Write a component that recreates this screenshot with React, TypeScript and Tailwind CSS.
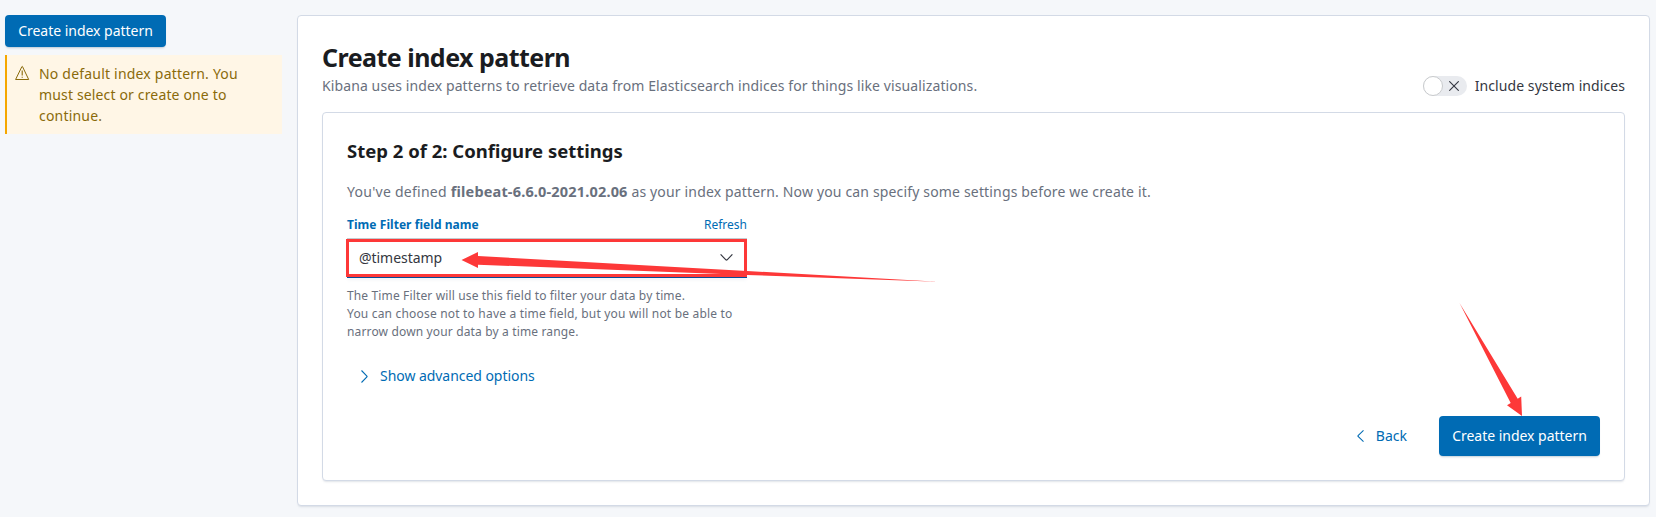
import type { ReactNode } from "react";

function PrimaryButton({ children, size }: { children: ReactNode; size: "s" | "m" }) {
  return (
    <button
      className={`w-[161px] shrink-0 rounded-[4px] bg-[#006bb4] text-center text-[14px] tracking-[-0.02px] text-white shadow-[0_2px_2px_-1px_rgba(54,97,126,0.3)] ${
        size === "s" ? "h-8 leading-8" : "h-10 leading-10"
      }`}
    >
      {children}
    </button>
  );
}

function WarningIcon() {
  return (
    <svg className="mt-[2px] block h-4 w-4 shrink-0" viewBox="0 0 16 16" fill="none" stroke="#8a6a0a">
      <path d="M6.9 1.6 0.6 14.5h13.1L7.5 1.6Q7.2 1.1 6.9 1.6Z" strokeWidth="1" strokeLinejoin="round" />
      <path d="M7.2 5.5v5M7.2 11.7v1" strokeWidth="1.1" />
    </svg>
  );
}

function Sidebar() {
  return (
    <aside className="w-[297px] shrink-0 pl-[5px] pt-[15px]">
      <PrimaryButton size="s">Create index pattern</PrimaryButton>
      <div className="mt-2 flex h-[79px] w-[277px] border-l-2 border-[#f5a700] bg-[#fff6e6] pl-2 pt-[8px]">
        <WarningIcon />
        <p className="ml-2 text-[14px] leading-[21px] tracking-[0.2px] text-[#8a6a0a]">
          No default index pattern. You
          <br />
          <span className="tracking-[0.15px]">must select or create one to</span>
          <br />
          continue.
        </p>
      </div>
    </aside>
  );
}

function SystemIndicesSwitch() {
  return (
    <label className="flex h-5 items-center">
      <span className="flex h-5 w-11 items-center rounded-full bg-[#e9ebef]">
        <span className="h-5 w-5 rounded-full border border-[#c9cbcd] bg-white" />
        <svg className="ml-[6px] h-[10px] w-[10px]" viewBox="0 0 10 10" stroke="#343741" strokeWidth="1.1">
          <path d="M0.3 0.3 9.7 9.7M9.7 0.3 0.3 9.7" />
        </svg>
      </span>
      <span className="ml-2 whitespace-nowrap text-[14px] leading-5 tracking-[0.08px] text-[#343741]">
        Include system indices
      </span>
    </label>
  );
}

function TimeFilterField() {
  return (
    <div className="w-[400px]">
      <div className="mt-[12px] flex h-5 items-center justify-between text-[12px] leading-5 text-[#006bb4]">
        <span className="font-bold tracking-[0.05px]">Time Filter field name</span>
        <span>Refresh</span>
      </div>
      <div className="mt-[3px] flex h-[40px] items-center justify-between border-b border-t border-b-[#084c98] border-t-[#c4cbd0] bg-white pl-3 pr-[14px] shadow-[0_3px_3px_-1px_rgba(152,162,179,0.12)]">
        <span className="text-[14px] leading-5 tracking-[-0.05px] text-[#343741]">@timestamp</span>
        <svg className="-mt-[2px] h-[7px] w-[13px]" viewBox="0 0 13 7" fill="none" stroke="#343741" strokeWidth="1.2">
          <path d="M0.6 0.4 5.9 5.8Q6.5 6.3 7.1 5.8L12.4 0.4" />
        </svg>
      </div>
      <p className="mt-[9px] whitespace-nowrap text-[12px] leading-[18px] text-[#69707d]">
        <span className="tracking-[0.14px]">The Time Filter will use this field to filter your data by time.</span>
        <br />
        <span className="tracking-[0.19px]">You can choose not to have a time field, but you will not be able to</span>
        <br />
        <span className="tracking-[0.15px]">narrow down your data by a time range.</span>
      </p>
    </div>
  );
}

function StepPanel() {
  return (
    <section className="mt-[16px] h-[369px] rounded-[4px] border border-[#d3dae6] bg-white px-6 shadow-[0_2px_2px_-1px_rgba(152,162,179,0.3)]">
      <h2 className="mt-[23px] text-[18.5px] font-bold leading-[30px] text-[#1a1c21]">
        Step 2 of 2: Configure settings
      </h2>
      <p className="mt-[13px] h-6 whitespace-nowrap text-[14px] leading-6 tracking-[0.16px] text-[#69707d]">
        <span className="tracking-[0.26px]">You've defined </span>
        <strong className="text-[14.5px] tracking-[0.17px]">filebeat-6.6.0-2021.02.06</strong> as your index pattern.
        Now you can specify some settings before we create it.
      </p>
      <TimeFilterField />
      <div className="mt-[23px] flex h-[24px] items-center pl-[14px] text-[14px] text-[#006bb4]">
        <svg className="h-[13px] w-[7px]" viewBox="0 0 7 13" fill="none" stroke="currentColor" strokeWidth="1.1">
          <path d="M0.5 0.5 5.9 6Q6.3 6.5 5.9 7L0.5 12.5" />
        </svg>
        <span className="ml-3 leading-6 tracking-[-0.05px]">Show advanced options</span>
      </div>
      <div className="mt-[28px] flex items-center justify-end">
        <div className="mr-[32px] flex items-center text-[14px] text-[#006bb4]">
          <svg className="mr-[12px] h-[12px] w-[7px]" viewBox="0 0 7 12" fill="none" stroke="currentColor" strokeWidth="1.1">
            <path d="M6.5 0.4 1.1 5.5Q0.7 6 1.1 6.5L6.5 11.6" />
          </svg>
          <span className="leading-6">Back</span>
        </div>
        <PrimaryButton size="m">Create index pattern</PrimaryButton>
      </div>
    </section>
  );
}

function Annotations() {
  return (
    <svg className="pointer-events-none absolute left-0 top-0 h-[517px] w-[1656px]" viewBox="0 0 1656 517" fill="#fd3838">
      <rect x="347.5" y="240.5" width="398" height="35" fill="none" stroke="#fd3838" strokeWidth="3" />
      <path d="M461.5 260 478 252V256L747 271 938 281.8 747 275 478 264.7V268Z" />
      <path d="M1459.5 303 1517.7 398.7 1521.2 396.5 1522 416 1507 405.3 1510.7 403Z" />
    </svg>
  );
}

export default function App() {
  return (
    <div className="relative flex h-[517px] w-[1656px] overflow-hidden bg-[#f5f7fa] font-['Noto_Sans',sans-serif]">
      <Sidebar />
      <main className="mt-[15px] h-[491px] w-[1353px] rounded-[4px] border border-[#d3dae6] bg-white px-6 shadow-[0_2px_2px_-1px_rgba(152,162,179,0.3)]">
        <header className="flex items-end justify-between pt-[23px]">
          <div>
            <h1 className="text-[25px] font-bold leading-[37px] tracking-[-0.53px] text-[#1a1c21]">Create index pattern</h1>
            <p className="whitespace-nowrap text-[14px] leading-5 tracking-[0.105px] text-[#69707d]">
              Kibana uses index patterns to retrieve data from Elasticsearch indices for things like visualizations.
            </p>
          </div>
          <SystemIndicesSwitch />
        </header>
        <StepPanel />
      </main>
      <Annotations />
    </div>
  );
}
